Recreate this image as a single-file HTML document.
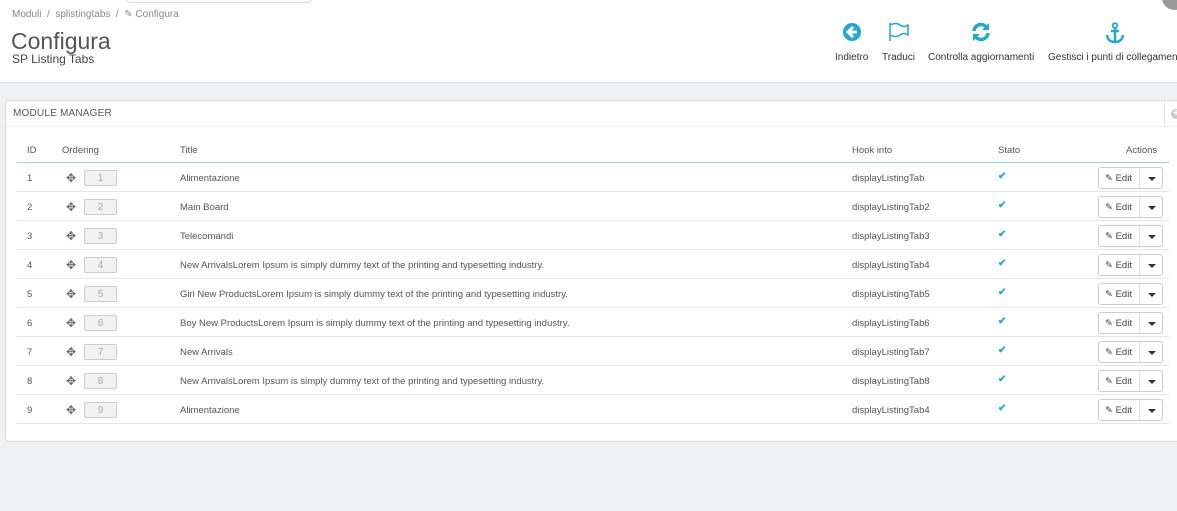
<!DOCTYPE html>
<html><head><meta charset="utf-8"><style>
*{box-sizing:border-box;margin:0;padding:0}
body{width:1177px;height:511px;overflow:hidden;background:#eff1f2;font-family:"Liberation Sans",sans-serif;color:#555;position:relative;font-size:10px}
.hdr{position:absolute;left:0;top:0;width:1177px;height:83px;background:#fff;border-bottom:1px solid #d9dcdf}
.search{position:absolute;left:125px;top:-10px;width:188px;height:13px;border:1px solid #ddd;border-radius:6px;background:#fff}
.bc{position:absolute;left:12px;top:9px;font-size:10px;color:#888}
h1{position:absolute;left:11px;top:28px;font-weight:normal;font-size:23px;color:#555}
.sub{position:absolute;left:12px;top:52px;font-size:12px;color:#444}
.tb{position:absolute;top:22px;text-align:center;font-size:10px;color:#333}
.tb svg{display:block;margin:0 auto 10px}
.panel{position:absolute;left:5px;top:100px;width:1180px;height:342px;background:#fff;border:1px solid #dcdcdc;border-radius:4px}
.ph{position:absolute;left:0;top:0;right:0;height:26px;border-bottom:1px solid #eee;font-size:10px;color:#555;padding:7px 0 0 7px;letter-spacing:.2px}
.row{position:absolute;left:17px;width:1152px;height:29px;border-bottom:1px solid #e6e6e6;font-size:9.5px;color:#555}
.row span{position:absolute;top:10px}
.th{border-bottom:1px solid #a0d0dc;height:22px;top:141px}
.th span{top:4px}
.box{position:absolute;left:67px;top:7px;width:33px;height:16px;border:1px solid #ccc;background:#f2f2f2;border-radius:2px;color:#aaa;text-align:center;line-height:15px;font-size:10px}
.btn{position:absolute;left:1081px;top:4px;width:65px;height:22px;border:1px solid #ccc;border-radius:3px;background:#fff}
.btn i{position:absolute;left:40px;top:0;width:1px;height:20px;background:#ddd}
.btn b{position:absolute;left:49px;top:9px;border-left:4px solid transparent;border-right:4px solid transparent;border-top:4px solid #333}
</style></head><body>
<div class="hdr">
<div class="search"></div>
<div class="bc">Moduli &nbsp;/&nbsp; splistingtabs &nbsp;/&nbsp; ✎ Configura</div>
<h1>Configura</h1>
<div class="sub">SP Listing Tabs</div>
<div class="tb" style="left:835px"><svg width="20" height="20" viewBox="0 0 20 20"><circle cx="10" cy="10" r="9" fill="#25a6d0"/><path d="M11 5 L6 10 L11 15 M6 10 H15" stroke="#fff" stroke-width="3" fill="none"/></svg>Indietro</div>
<div class="tb" style="left:882px"><svg width="24" height="20" viewBox="0 0 24 20"><path d="M4 1 V19 M4 3 Q10 0 14 3 T22 3 V13 Q18 10 14 13 T4 13" stroke="#25a6d0" stroke-width="1.5" fill="none"/></svg>Traduci</div>
<div class="tb" style="left:928px"><svg width="22" height="20" viewBox="0 0 22 20"><path d="M4 9 A7 7 0 0 1 17 6 M18 11 A7 7 0 0 1 5 14" stroke="#25a6d0" stroke-width="3.5" fill="none"/><path d="M19 1 V8 H12Z M3 19 V12 H10Z" fill="#25a6d0"/></svg>Controlla aggiornamenti</div>
<div class="tb" style="left:1048px;white-space:nowrap"><svg width="22" height="22" viewBox="0 0 22 22" style="margin-bottom:8px"><circle cx="11" cy="3.5" r="2.3" stroke="#25a6d0" stroke-width="1.8" fill="none"/><path d="M11 6 V20 M7 9 H15 M3 13 Q4 20 11 20 Q18 20 19 13" stroke="#25a6d0" stroke-width="2.5" fill="none"/></svg>Gestisci i punti di collegamenti</div>
<div style="position:absolute;left:1162px;top:-14px;width:26px;height:24px;border-radius:50%;background:#999"></div>
</div>
<div class="panel"><div class="ph">MODULE MANAGER</div>
<div style="position:absolute;left:1158px;top:0;width:24px;height:26px;border-left:1px solid #e6e6e6"><div style="position:absolute;left:6px;top:8px;width:10px;height:10px;border-radius:50%;background:#ccc;color:#fff;font-size:10px;line-height:10px;text-align:center;font-weight:bold">+</div></div>
</div>
<div class="row th"><span style="left:10px">ID</span><span style="left:45px">Ordering</span><span style="left:163px">Title</span><span style="left:835px">Hook into</span><span style="left:981px">Stato</span><span style="left:1109px">Actions</span></div>
<div id="rows"></div>
<script>
var d=[["Alimentazione","displayListingTab"],["Main Board","displayListingTab2"],["Telecomandi","displayListingTab3"],["New ArrivalsLorem Ipsum is simply dummy text of the printing and typesetting industry.","displayListingTab4"],["Girl New ProductsLorem Ipsum is simply dummy text of the printing and typesetting industry.","displayListingTab5"],["Boy New ProductsLorem Ipsum is simply dummy text of the printing and typesetting industry.","displayListingTab6"],["New Arrivals","displayListingTab7"],["New ArrivalsLorem Ipsum is simply dummy text of the printing and typesetting industry.","displayListingTab8"],["Alimentazione","displayListingTab4"]];
var h="";d.forEach(function(r,i){var t=163+i*29;h+='<div class="row" style="top:'+t+'px"><span style="left:10px">'+(i+1)+'</span><span style="left:49px;top:8px;font-size:12px;color:#666">✥</span><div class="box">'+(i+1)+'</div><span style="left:163px">'+r[0]+'</span><span style="left:835px">'+r[1]+'</span><span style="left:981px;top:8px;color:#25a6d0;font-size:10px;font-weight:bold">✔</span><div class="btn"><span style="left:6px;top:5px;color:#444">✎ Edit</span><i></i><b></b></div></div>'});
document.getElementById("rows").innerHTML=h;
</script>
</body></html>
